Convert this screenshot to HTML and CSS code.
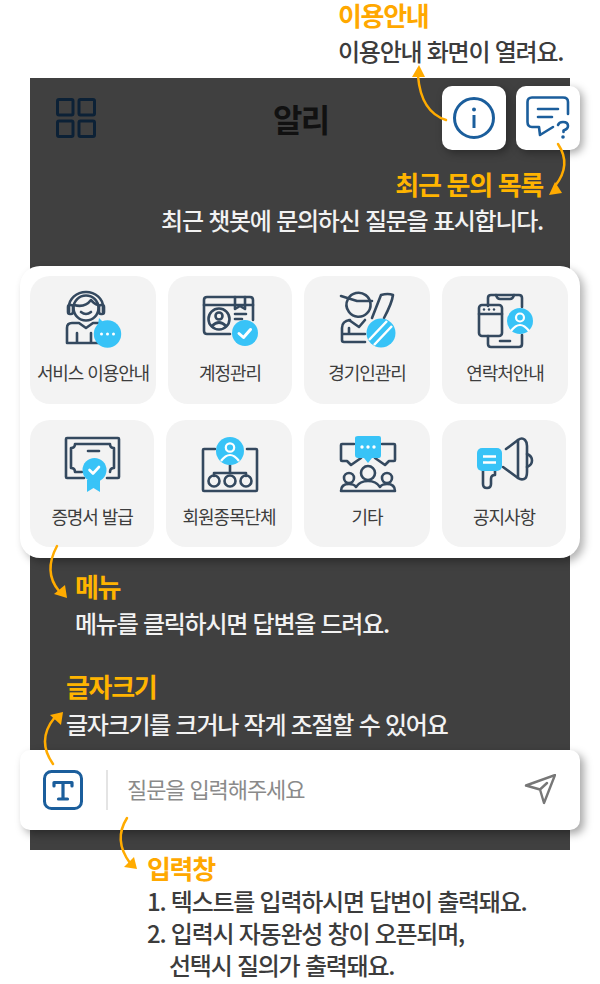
FILE: index.html
```html
<!DOCTYPE html>
<html lang="ko">
<head>
<meta charset="utf-8">
<title>이용안내</title>
<link rel="stylesheet" href="styles.css">
</head>
<body>
<div class="page">
  <section class="note note-top">
    <h2 class="note-title">이용안내</h2>
    <p class="note-text dark">이용안내 화면이 열려요.</p>
  </section>

  <main class="screen">
    <header class="head">
      <svg class="grid-icon" width="40" height="40" viewBox="0 0 40 40"><g fill="none" stroke="#0c2136" stroke-width="3"><rect x="1.5" y="1.5" width="15.5" height="15.5" rx="1.5"/><rect x="23" y="1.5" width="15.5" height="15.5" rx="1.5"/><rect x="1.5" y="23" width="15.5" height="15.5" rx="1.5"/><rect x="23" y="23" width="15.5" height="15.5" rx="1.5"/></g></svg>
      <h1 class="app-title">알리</h1>
      <button class="head-btn">
        <svg width="44" height="44" viewBox="0 0 44 44"><circle cx="22" cy="22" r="19.5" fill="none" stroke="#1b5e9c" stroke-width="3"/><circle cx="22" cy="13.5" r="2" fill="#1b5e9c"/><path d="M22 19v13" stroke="#1b5e9c" stroke-width="3" fill="none"/></svg>
      </button>
      <button class="head-btn">
        <svg width="44" height="46" viewBox="0 0 44 46"><g fill="none" stroke="#1b5e9c" stroke-width="2.6" stroke-linecap="round" stroke-linejoin="round"><path d="M27 32 14 40 13 32H6Q1.500 32 1.500 27V7Q1.500 2.500 6 2.500H37Q42 2.500 42 7V19"/><path d="M12 14H32M12 22H26"/><path d="M32 30Q33 27 37 27 42 27 42 31 42 34 37.500 35.500V37"/></g><circle cx="37" cy="42" r="1.800" fill="#1b5e9c"/></svg>
      </button>
    </header>

    <section class="note note-recent">
      <h2 class="note-title gold">최근 문의 목록</h2>
      <p class="note-text light">최근 챗봇에 문의하신 질문을 표시합니다.</p>
    </section>

    <nav class="menu-card">
      <div class="menu-row">
        <a class="tile wide">
          <svg class="tile-icon" width="64" height="60" viewBox="0 0 64 60"><g fill="none" stroke="#34495f" stroke-width="2.600" stroke-linecap="round" stroke-linejoin="round"><path d="M8 22V17A17 15 0 0 1 42 17V22"/><rect x="7" y="15" width="5" height="9" rx="2"/><rect x="38" y="15" width="5" height="9" rx="2"/><circle cx="25" cy="18" r="12.500"/><path d="M13 15Q24 18 30 10 33 14 37 15"/><path d="M20 22Q25 26 30 22"/><path d="M6 53V38Q6 33 11 33H18L25 38 32 33H38M6 53H40M16 53V43M30 43V53"/></g><circle cx="46.500" cy="44" r="13.700" fill="#38c3f7"/><path d="M38 28l5 5-6 2z" fill="#38c3f7"/><g fill="#fff"><circle cx="40.500" cy="44" r="1.500"/><circle cx="46.500" cy="44" r="1.500"/><circle cx="52.500" cy="44" r="1.500"/></g></svg>
          <span class="tile-label">서비스 이용안내</span>
        </a>
        <a class="tile narrow">
          <svg class="tile-icon" width="64" height="60" viewBox="0 0 64 60"><g fill="none" stroke="#34495f" stroke-width="2.600" stroke-linecap="round" stroke-linejoin="round"><path d="M32 44H9Q6 44 6 41V10Q6 7 9 7H52Q55 7 55 10V30"/><path d="M6 15H55"/><path d="M37 7V19L42 16 47 19V7"/><circle cx="21" cy="29" r="10.500"/><circle cx="21" cy="26" r="3.500"/><path d="M14 36Q21 29 28 36"/><path d="M37 24H48M37 29H44"/></g><circle cx="47" cy="43" r="13" fill="#38c3f7"/><path d="M41 43.500l4.500 4 7-8" fill="none" stroke="#fff" stroke-width="3" stroke-linecap="round" stroke-linejoin="round"/></svg>
          <span class="tile-label">계정관리</span>
        </a>
        <a class="tile wide">
          <svg class="tile-icon" width="64" height="60" viewBox="0 0 64 60"><g fill="none" stroke="#34495f" stroke-width="2.600" stroke-linecap="round" stroke-linejoin="round"><path d="M6 6 22 11H37"/><path d="M13 9A12 12 0 1 1 14 22 12 12 0 0 1 13 9Z"/><path d="M37 28 46 5Q53 3 58 5 57 13 49 28"/><path d="M14 30 24 37 30 30"/><path d="M15 30Q7 31 7 38V50Q7 52 9 52H30M7 44H14V38M14 44H30"/></g><circle cx="46" cy="43" r="14.500" fill="#38c3f7"/><path d="M34 50 52 31M39 55 57 36" stroke="#fff" stroke-width="2.500"/></svg>
          <span class="tile-label">경기인관리</span>
        </a>
        <a class="tile wide">
          <svg class="tile-icon" width="64" height="60" viewBox="0 0 64 60"><g fill="none" stroke="#34495f" stroke-width="2.600" stroke-linecap="round" stroke-linejoin="round"><path d="M15 16V8Q15 5 18 5H46Q49 5 49 8V17M49 45V54Q49 57 46 57H18Q15 57 15 54V46"/><path d="M23 5Q24 9 27 9H37Q40 9 41 5"/><path d="M27 51H37"/><rect x="6" y="15" width="23" height="31" rx="3"/><path d="M6 24H29"/></g><g fill="#34495f"><circle cx="11" cy="19.500" r="1.200"/><circle cx="16" cy="19.500" r="1.200"/><circle cx="21" cy="19.500" r="1.200"/></g><circle cx="47" cy="31" r="13" fill="#38c3f7"/><circle cx="47" cy="27.500" r="4" fill="none" stroke="#fff" stroke-width="2.200"/><path d="M38 41Q47 29 56 41" fill="none" stroke="#fff" stroke-width="2.200"/></svg>
          <span class="tile-label">연락처안내</span>
        </a>
      </div>
      <div class="menu-row">
        <a class="tile narrow">
          <svg class="tile-icon" width="64" height="60" viewBox="0 0 64 60"><g fill="none" stroke="#34495f" stroke-width="2.600" stroke-linecap="round" stroke-linejoin="round"><path d="M24 44H7Q6 44 6 43V5Q6 4 7 4H58Q59 4 59 5V43Q59 44 58 44H47"/><path d="M15 10H50Q50 14 54 14V34Q50 34 50 38M15 10Q15 14 11 14V34Q15 34 15 38H22"/><path d="M28 17H39"/></g><path d="M27 46H40V58L33.500 54 27 58Z" fill="#38c3f7"/><circle cx="34.500" cy="36" r="12" fill="#38c3f7"/><path d="M29.500 36l3.500 3.500 6-6.500" fill="none" stroke="#fff" stroke-width="2.600" stroke-linecap="round" stroke-linejoin="round"/></svg>
          <span class="tile-label">증명서 발급</span>
        </a>
        <a class="tile wide">
          <svg class="tile-icon" width="64" height="60" viewBox="0 0 64 60"><g fill="none" stroke="#34495f" stroke-width="2.600" stroke-linecap="round" stroke-linejoin="round"><path d="M18 15H7Q6 15 6 16V56Q6 57 7 57H59Q60 57 60 56V16Q60 15 59 15H50"/><path d="M33 31V39M17 42V39H49V42"/><circle cx="17" cy="47" r="5.500"/><circle cx="33" cy="47" r="5.500"/><circle cx="49" cy="47" r="5.500"/></g><circle cx="33" cy="17" r="14" fill="#38c3f7"/><circle cx="33" cy="13.500" r="4.200" fill="none" stroke="#fff" stroke-width="2.200"/><path d="M24 27Q33 15 42 27" fill="none" stroke="#fff" stroke-width="2.200"/></svg>
          <span class="tile-label">회원종목단체</span>
        </a>
        <a class="tile wide">
          <svg class="tile-icon" width="64" height="60" viewBox="0 0 64 60"><g fill="none" stroke="#34495f" stroke-width="2.600" stroke-linecap="round" stroke-linejoin="round"><path d="M19 10H7Q6 10 6 11V26Q6 27 7 27H12L16 31 26 24"/><path d="M47 10H59Q60 10 60 11V26Q60 27 59 27H54L50 31 40 24"/><circle cx="33" cy="39" r="7"/><circle cx="14" cy="44" r="5"/><circle cx="52" cy="44" r="5"/></g><path d="M6 57Q6 50 14 50 19 50 21 53 25 47 33 47 41 47 45 53 47 50 52 50 60 50 60 57Z" fill="none" stroke="#34495f" stroke-width="2.600" stroke-linejoin="round"/><path d="M23 2H44Q46 2 46 4V21Q46 24 44 24H37L33 29 29 24H23Q20 24 20 21V4Q20 2 23 2Z" fill="#38c3f7"/><g fill="#fff"><circle cx="27" cy="13" r="1.700"/><circle cx="33" cy="13" r="1.700"/><circle cx="39" cy="13" r="1.700"/></g></svg>
          <span class="tile-label">기타</span>
        </a>
        <a class="tile narrow">
          <svg class="tile-icon" width="64" height="60" viewBox="0 0 64 60"><g fill="none" stroke="#34495f" stroke-width="2.600" stroke-linecap="round" stroke-linejoin="round"><path d="M34 15 46 6Q50 3 53 6 55 8 55 12V38Q55 44 52 45 49 46 46 44L31 33"/><path d="M46 6V44"/><path d="M55 20Q60 22 60 26.500 60 31 55 33"/><path d="M11 36V50Q11 54 15 54 19 54 19 50V45Q19 41 23 41V36"/></g><rect x="5" y="14" width="25" height="23" rx="5" fill="#38c3f7"/><path d="M11 22.500H24M11 28.500H24" stroke="#fff" stroke-width="2.400"/></svg>
          <span class="tile-label">공지사항</span>
        </a>
      </div>
    </nav>

    <section class="note note-menu">
      <h2 class="note-title gold">메뉴</h2>
      <p class="note-text light">메뉴를 클릭하시면 답변을 드려요.</p>
    </section>

    <section class="note note-font">
      <h2 class="note-title gold">글자크기</h2>
      <p class="note-text light">글자크기를 크거나 작게 조절할 수 있어요</p>
    </section>

    <form class="input-bar">
      <svg class="t-icon" width="40" height="40" viewBox="0 0 40 40"><rect x="1.500" y="1.500" width="37" height="37" rx="7" fill="none" stroke="#1b5e9c" stroke-width="3"/><path d="M11 16V12.500H29V16M20 12.500V29M15.500 29H24.500" fill="none" stroke="#1b5e9c" stroke-width="3.200" stroke-linecap="round" stroke-linejoin="round"/></svg>
      <span class="divider"></span>
      <span class="placeholder">질문을 입력해주세요</span>
      <svg class="send-icon" width="32" height="32" viewBox="0 0 32 32"><path d="M2 11.500 31 1 20 29 16 15.500ZM16 15.500 23 9" fill="none" stroke="#777" stroke-width="2.400" stroke-linejoin="round" stroke-linecap="round"/></svg>
    </form>
  </main>

  <section class="note note-input">
    <h2 class="note-title">입력창</h2>
    <ol class="steps">
      <li class="step">1. 텍스트를 입력하시면 답변이 출력돼요.</li>
      <li class="step">2. 입력시 자동완성 창이 오픈되며,</li>
      <li class="step step-cont">선택시 질의가 출력돼요.</li>
    </ol>
  </section>

  <svg class="arrows" width="600" height="984" viewBox="0 0 600 984">
    <g fill="none" stroke="#ffab00" stroke-width="2.500" stroke-linecap="round">
      <path d="M446 120Q421 112 418 76"/>
      <path d="M558 144Q572 165 555 186"/>
      <path d="M57 546Q43 572 59 591"/>
      <path d="M53 764Q36 740 55 717"/>
      <path d="M127 818Q113 840 130 863"/>
    </g>
    <g fill="#ffab00">
      <path d="M419 65 412 77H425Z"/>
      <path d="M549 195 555 182 562 193Z"/>
      <path d="M67 598 54 594 65 585Z"/>
      <path d="M63 712 50 715 61 725Z"/>
      <path d="M137 869 124 867 134 857Z"/>
    </g>
  </svg>
</div>
</body>
</html>
```

FILE: styles.css
```css
* { box-sizing: border-box; }
html, body { margin: 0; padding: 0; background: #fff; }
body { font-family: "Noto Sans CJK KR", "Noto Sans", sans-serif; }

.page { position: relative; width: 600px; height: 984px; overflow: hidden; }

.note-title {
  margin: 0;
  font-size: 26px;
  line-height: 30px;
  font-weight: 700;
  letter-spacing: -1.3px;
  color: #ffa800;
}
.note-title.gold { color: #ffb400; }
.note-text {
  margin: 6px 0 0;
  font-size: 24px;
  line-height: 30px;
  font-weight: 500;
  letter-spacing: -1.25px;
  white-space: nowrap;
}
.note-text.dark { color: #3c3c3c; }
.note-text.light { color: #f2f2f2; }

.note-top { height: 78px; padding-left: 338px; }

.screen {
  width: 540px;
  height: 772px;
  margin-left: 30px;
  padding-top: 8px;
  background: #404040;
}

.head { display: flex; align-items: center; gap: 10px; margin-right: -10px; height: 64px; padding-left: 26px; }
.grid-icon { flex: none; margin-right: 167px; }
.app-title { margin: 0 auto 0 0; font-size: 32px; line-height: 40px; font-weight: 700; color: #111; letter-spacing: -1.6px; }
.head-btn {
  display: flex; align-items: center; justify-content: center;
  width: 64px; height: 64px; padding: 0; border: 0;
  background: #fff; border-radius: 10px;
  box-shadow: 3px 3px 8px rgba(0, 0, 0, .35);
}

.note-recent { margin-top: 19px; text-align: right; padding-right: 27px; }

.menu-card {
  display: flex; flex-direction: column; gap: 16px;
  width: 560px; height: 292px;
  margin: 31px 0 0 -10px;
  padding: 10px 0 0 10px;
  background: #fff; border-radius: 20px;
  box-shadow: 4px 4px 8px rgba(0, 0, 0, .3);
}
.menu-row { display: flex; gap: 12px; height: 128px; }
.menu-row + .menu-row { height: 127px; }
.tile {
  display: flex; flex-direction: column; align-items: center;
  padding-top: 14px;
  background: #f3f3f3; border-radius: 20px;
  color: #3d3d3d;
}
.tile.wide { width: 126px; }
.tile.narrow { width: 124px; }
.tile-icon { display: block; flex: none; }
.tile-label { margin-top: 9px; font-size: 18px; line-height: 26px; letter-spacing: -1.1px; white-space: nowrap; }

.note-menu { margin-top: 13px; padding-left: 45px; }
.note-menu .note-text { margin-top: 7px; }
.note-font { margin-top: 33px; padding-left: 36px; }
.note-font .note-text { margin-top: 8px; }

.input-bar {
  display: flex; align-items: center;
  width: 560px; height: 80px;
  margin: 11px 0 0 -10px;
  padding: 0 24px 0 23px;
  background: #fff; border-radius: 10px;
  box-shadow: 4px 4px 8px rgba(0, 0, 0, .35);
}
.t-icon { flex: none; }
.divider { flex: none; width: 2px; height: 40px; margin: 0 19px 0 23px; background: #e4e4e4; }
.placeholder { flex: 1; margin-bottom: 4px; font-size: 22px; letter-spacing: -1.1px; color: #8a8a8a; }
.send-icon { flex: none; }

.note-input { margin-top: 3px; padding-left: 147px; }
.steps { list-style: none; margin: 2px 0 0; padding: 0; }
.step { font-size: 24px; line-height: 32px; font-weight: 500; letter-spacing: -1.25px; color: #3c3c3c; white-space: nowrap; }
.step-cont { padding-left: 22px; }

.arrows { position: absolute; left: 0; top: 0; pointer-events: none; }
```
